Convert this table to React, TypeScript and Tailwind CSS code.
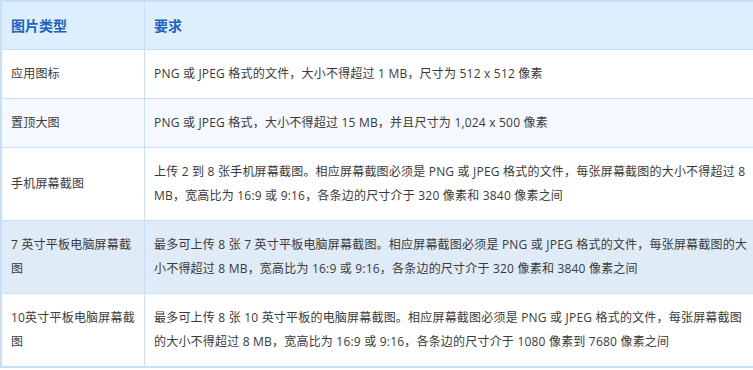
import React from "react";

const rows: { name: string; req: string; bg: string }[] = [
  { name: "应用图标", req: "PNG 或 JPEG 格式的文件，大小不得超过 1 MB，尺寸为 512 x 512 像素", bg: "bg-white" },
  { name: "置顶大图", req: "PNG 或 JPEG 格式，大小不得超过 15 MB，并且尺寸为 1,024 x 500 像素", bg: "bg-[#f5f9ff]" },
  { name: "手机屏幕截图", req: "上传 2 到 8 张手机屏幕截图。相应屏幕截图必须是 PNG 或 JPEG 格式的文件，每张屏幕截图的大小不得超过 8 MB，宽高比为 16:9 或 9:16，各条边的尺寸介于 320 像素和 3840 像素之间", bg: "bg-white" },
  { name: "7 英寸平板电脑屏幕截图", req: "最多可上传 8 张 7 英寸平板电脑屏幕截图。相应屏幕截图必须是 PNG 或 JPEG 格式的文件，每张屏幕截图的大小不得超过 8 MB，宽高比为 16:9 或 9:16，各条边的尺寸介于 320 像素和 3840 像素之间", bg: "bg-[#dfebf7]" },
  { name: "10英寸平板电脑屏幕截图", req: "最多可上传 8 张 10 英寸平板的电脑屏幕截图。相应屏幕截图必须是 PNG 或 JPEG 格式的文件，每张屏幕截图的大小不得超过 8 MB，宽高比为 16:9 或 9:16，各条边的尺寸介于 1080 像素到 7680 像素之间", bg: "bg-white" },
];

export default function App() {
  return (
    <div className="w-[753px] h-[370px] overflow-hidden bg-white" style={{ fontFamily: '"Open Sans", "Noto Sans CJK SC", sans-serif' }}>
      <div className="w-[770px] border-t-2 border-l-2 border-b-2 border-[#c6e0fa]">
        <div className="grid grid-cols-[143px_1fr] bg-[#ddeeff] border-b border-[#c6e0fa] h-[48px]">
          <div className="border-r border-[#c6e0fa] px-[9px] flex items-center text-[14px] font-bold text-[#1c62c0]">图片类型</div>
          <div className="px-[9px] flex items-center text-[14px] font-bold text-[#1c62c0]">要求</div>
        </div>
        {rows.map((r, i) => (
          <div key={i} className={`grid grid-cols-[143px_1fr] ${r.bg} ${i < rows.length - 1 ? "border-b border-[#c6e0fa]" : ""}`}>
            <div className="border-r border-[#c6e0fa] pl-[9px] pr-[2px] py-[12px] text-[12px] leading-[24px] tracking-[0.2px] text-[#3a3a3a] flex items-center">
              <span>{r.name}</span>
            </div>
            <div className="pl-[9px] pr-[20px] py-[12px] text-[12px] leading-[24px] tracking-[0.2px] text-[#3a3a3a] flex items-center">
              <span>{r.req}</span>
            </div>
          </div>
        ))}
      </div>
    </div>
  );
}
